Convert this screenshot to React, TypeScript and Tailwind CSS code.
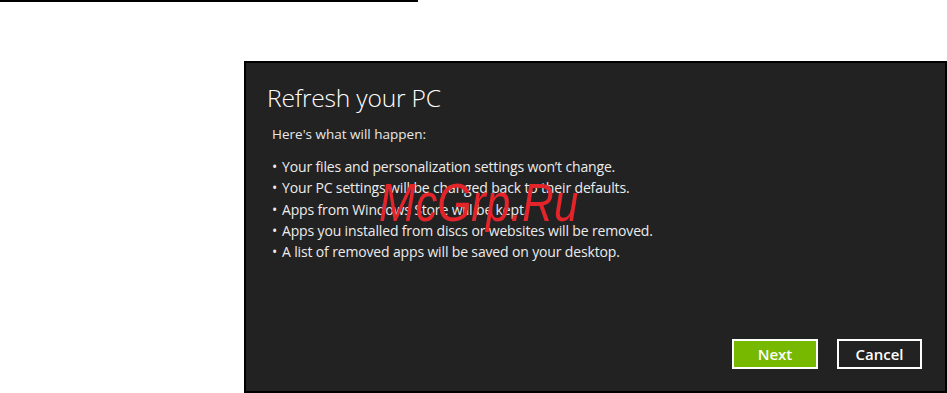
import React from "react";

const bullets = [
  "Your files and personalization settings won’t change.",
  "Your PC settings will be changed back to their defaults.",
  "Apps from Windows Store will be kept.",
  "Apps you installed from discs or websites will be removed.",
  "A list of removed apps will be saved on your desktop.",
];

export default function App() {
  return (
    <div
      className="relative w-[947px] h-[393px] bg-white overflow-hidden"
      style={{ fontFamily: '"Open Sans", "Noto Sans", sans-serif' }}
    >
      <div className="h-[2px] w-[418px] bg-black" />
      <div className="ml-[244px] mt-[59px] w-[703px] h-[332px] border-2 border-black bg-[#222222] flex flex-col pl-[21px] pr-[23px] pb-[22px] text-white">
        <h1 className="mt-[18px] text-[24.6px] leading-[34px] font-light tracking-[-0.2px]">
          Refresh your PC
        </h1>
        <p className="mt-[9px] ml-[5px] text-[13.5px] leading-[20px] text-[#e8e8e8]">
          Here's what will happen:
        </p>
        <ul className="mt-[12px] ml-[5px] flex flex-col">
          {bullets.map((b) => (
            <li key={b} className="flex text-[14px] leading-[21.3px] tracking-[-0.15px] text-[#ececec]">
              <span className="w-[10px] shrink-0">•</span>
              <span>{b}</span>
            </li>
          ))}
        </ul>
        <div className="mt-auto flex justify-end gap-[19px]">
          <button className="w-[86px] h-[30px] border-2 border-white bg-[#76b900] text-white text-[15px] font-semibold flex items-center justify-center">
            Next
          </button>
          <button className="w-[85px] h-[30px] border-2 border-white bg-[#222222] text-white text-[15px] font-semibold flex items-center justify-center">
            Cancel
          </button>
        </div>
      </div>
      <div
        className="absolute left-[379px] top-[172px] text-[54px] italic leading-[60px] text-[#e3242b] origin-left scale-x-[0.81]"
        style={{ fontFamily: '"Liberation Sans", Arial, sans-serif' }}
      >
        McGrp.Ru
      </div>
    </div>
  );
}
